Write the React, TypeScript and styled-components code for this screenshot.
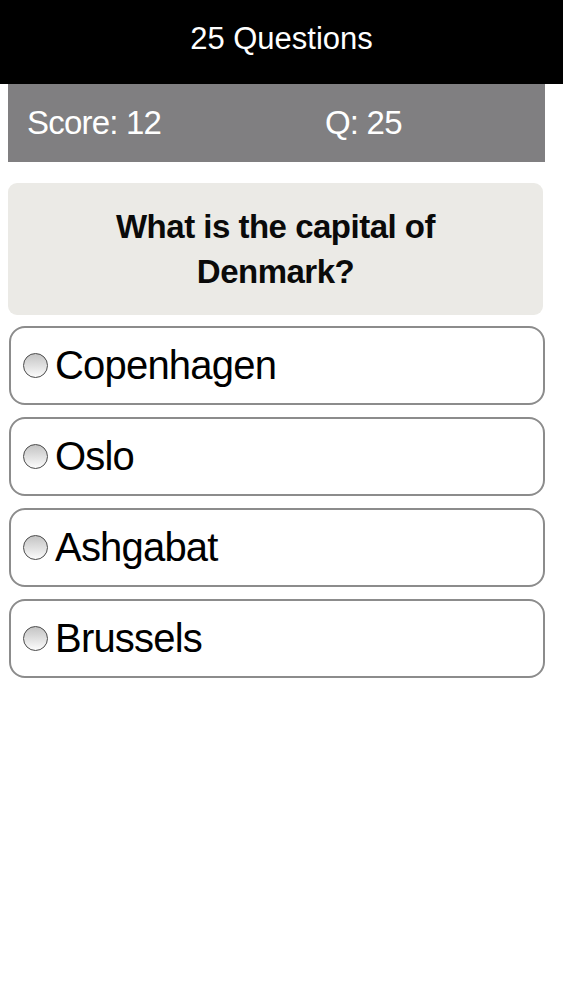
import React from 'react';
import styled, { createGlobalStyle } from 'styled-components';

const GlobalStyle = createGlobalStyle`
  html, body {
    margin: 0;
    padding: 0;
    background: #ffffff;
    font-family: "Liberation Sans", Arial, sans-serif;
  }
`;

const answers = ['Copenhagen', 'Oslo', 'Ashgabat', 'Brussels'];

export default function App() {
  return (
    <>
      <GlobalStyle />
      <Page>
        <Header>25 Questions</Header>
        <Content>
          <ScoreBar>
            <ScoreText>Score: 12</ScoreText>
            <ScoreText>Q: 25</ScoreText>
          </ScoreBar>
          <QuestionCard>
            What is the capital of
            <br />
            Denmark?
          </QuestionCard>
          <AnswerList>
            {answers.map((answer) => (
              <AnswerRow key={answer}>
                <Radio />
                <AnswerLabel>{answer}</AnswerLabel>
              </AnswerRow>
            ))}
          </AnswerList>
        </Content>
      </Page>
    </>
  );
}

const Page = styled.div`
  width: 563px;
  min-height: 1000px;
  background: #ffffff;
`;

const Header = styled.div`
  height: 84px;
  box-sizing: border-box;
  padding-bottom: 6px;
  background: #000000;
  color: #ffffff;
  display: flex;
  align-items: center;
  justify-content: center;
  font-size: 31px;
`;

const Content = styled.div`
  padding-left: 8px;
  width: 537px;
`;

const ScoreBar = styled.div`
  height: 78px;
  background: #807f81;
  display: grid;
  grid-template-columns: 298px 1fr;
  align-items: center;
  padding-left: 19px;
  box-sizing: border-box;
`;

const ScoreText = styled.span`
  color: #ffffff;
  font-size: 33px;
  letter-spacing: -0.8px;
`;

const QuestionCard = styled.div`
  margin-top: 21px;
  width: 535px;
  height: 132px;
  box-sizing: border-box;
  padding-top: 21px;
  border-radius: 9px;
  background: #ebeae6;
  text-align: center;
  font-size: 33px;
  font-weight: bold;
  line-height: 45px;
  letter-spacing: -0.5px;
  color: #0a0a0a;
`;

const AnswerList = styled.div`
  margin-top: 11px;
  margin-left: 1px;
  display: flex;
  flex-direction: column;
  gap: 12px;
`;

const AnswerRow = styled.div`
  height: 79px;
  box-sizing: border-box;
  border: 2px solid #8c8c8c;
  border-radius: 16px;
  background: #ffffff;
  display: flex;
  align-items: center;
  padding-left: 12px;
  gap: 7px;
`;

const Radio = styled.span`
  width: 23px;
  height: 23px;
  border-radius: 50%;
  border: 1.5px solid #4a4a4a;
  background: linear-gradient(180deg, #c4c4c4 0%, #e2e2e2 55%, #fcfcfc 100%);
  flex-shrink: 0;
`;

const AnswerLabel = styled.span`
  font-size: 40px;
  letter-spacing: -0.8px;
  color: #000000;
`;
